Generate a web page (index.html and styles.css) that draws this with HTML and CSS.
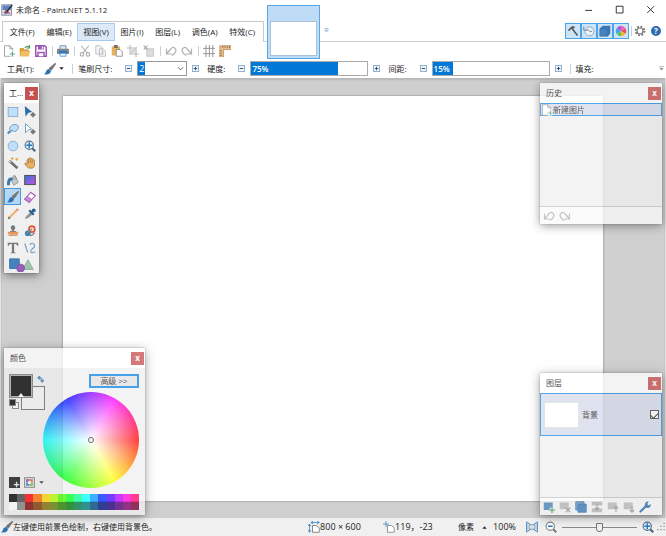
FILE: index.html
```html
<!DOCTYPE html>
<html lang="zh-CN">
<head>
<meta charset="utf-8">
<title>未命名 - Paint.NET 5.1.12</title>
<link rel="stylesheet" href="styles.css">
</head>
<body>
<svg class="defs" aria-hidden="true">
  <defs>
    <linearGradient id="grad" x1="0" y1="0" x2="1" y2="1"><stop offset="0" stop-color="#2878d8"/><stop offset="1" stop-color="#d050e0"/></linearGradient>
  </defs>
  <symbol id="page" viewBox="0 0 16 16"><path d="M2 1h7l4 4v10H2z" fill="#fff" stroke="#8a8a8a"/><path d="M9 1v4h4" fill="none" stroke="#8a8a8a"/></symbol>
  <symbol id="new" viewBox="0 0 16 16"><use href="#page"/><path d="M12 7v9M8 12h8" stroke="#fff" stroke-width="4"/><path d="M12.500 8.500v7M9 12h7" stroke="#5cb080" stroke-width="1.500"/></symbol>
  <symbol id="open" viewBox="0 0 16 16"><path d="M1 4h5l1 2h6v9H1z" fill="#d99a3a"/><path d="M3 8h12l-2 7H1z" fill="#f0bd62"/><path d="M8 4c1-3 4-3 6-1M14 0v4h-4" fill="none" stroke="#4b9b63" stroke-width="1.500"/></symbol>
  <symbol id="save" viewBox="0 0 16 16"><path d="M1 1h12l2 2v12H1z" fill="#fff" stroke="#9b55b5" stroke-width="2"/><path d="M4 1h8v5H4zM3 9h10v6H3z" fill="#9b55b5"/><path d="M9 2h2v3H9zM5 11h6v4H5z" fill="#fff"/></symbol>
  <symbol id="print" viewBox="0 0 16 16"><path d="M4 1h8v5H4z" fill="#dceaf7" stroke="#687787"/><rect x="0" y="5" width="16" height="7" rx="1" fill="#7d858d"/><path d="M3 8h10v4H3z" fill="#2878c0"/><path d="M4 11h8v4H4z" fill="#e4f1fc" stroke="#4b8fd0"/></symbol>
  <symbol id="cut" viewBox="0 0 16 16"><path d="M3 1l8 10M13 1L5 11" stroke="#adadad" stroke-width="1.500"/><circle cx="4" cy="12.500" r="2.300" fill="none" stroke="#adadad" stroke-width="1.500"/><circle cx="12" cy="12.500" r="2.300" fill="none" stroke="#adadad" stroke-width="1.500"/></symbol>
  <symbol id="copy" viewBox="0 0 16 16"><path d="M1 1h6l3 3v8H1zM6 5h5l3 3v7H6z" fill="#f4f4f4" stroke="#b3b3b3"/><path d="M8 9h4M8 12h4" stroke="#c6c6c6"/></symbol>
  <symbol id="paste" viewBox="0 0 16 16"><path d="M1 2h11v12H1z" fill="#e6b25a"/><path d="M4 0h5v4H4z" fill="#77706a"/><path d="M7 6h5l3 3v6H7z" fill="#fff" stroke="#777"/></symbol>
  <symbol id="crop" viewBox="0 0 16 16"><path d="M4 0v12h12M0 4h12v12" fill="none" stroke="#b8b8b8" stroke-width="1.500"/><path d="M5 5h6v6H5z" fill="#ddd"/><path d="M5 11l9-9" stroke="#bbb"/></symbol>
  <symbol id="deselect" viewBox="0 0 16 16"><path d="M5 5h9v10H5z" fill="#dcdcdc" stroke="#bcbcbc"/><path d="M1 1l5 5M6 1L1 6" stroke="#adadad" stroke-width="1.500"/></symbol>
  <symbol id="undo" viewBox="0 0 16 16"><path d="M2 5v7h7M2 12l6-7c3-4 8 0 6 4-1 3-3 4-5 5" fill="none" stroke="#b0b0b0" stroke-width="1.600"/></symbol>
  <symbol id="redo" viewBox="0 0 16 16"><path d="M14 5v7H7M14 12L8 5C5 1 0 5 2 9c1 3 3 4 5 5" fill="none" stroke="#b0b0b0" stroke-width="1.600"/></symbol>
  <symbol id="grid" viewBox="0 0 16 16"><path d="M4 0v16M8.500 0v16M13 0v16M0 4.500h16M0 11.500h16" stroke="#8c8c8c" stroke-width="1.200"/></symbol>
  <symbol id="ruler" viewBox="0 0 16 16"><path d="M1 1h15v5H6v10H1z" fill="#e8c087" stroke="#b98f58"/><path d="M5 1v3M8 1v3M11 1v3M14 1v3M1 8h3M1 11h3M1 14h3" stroke="#8d6a3d"/></symbol>
  <symbol id="brush" viewBox="0 0 16 16"><path d="M15 1L9.500 9 7.500 7z" fill="#777" stroke="#777" stroke-width="2" stroke-linejoin="round"/><path d="M6 8c2 0 4 2 3 4-1 3-5 4-9 3 3-1 2-6 6-7z" fill="#2e72b4"/></symbol>
  <symbol id="app" viewBox="0 0 16 16"><path d="M1 1h13v14H1z" fill="#d9e5f5" stroke="#6c7480"/><path d="M2 2h11v6H2z" fill="#5585c4"/><path d="M3 12l4-5 6 6z" fill="#d14c3e"/><path d="M15 1L8 10" stroke="#333" stroke-width="2"/><path d="M8 9l1 3-5 2z" fill="#235ab0"/></symbol>
  <symbol id="hammer" viewBox="0 0 16 16"><path d="M1 7l5-5c3-1 4 0 5 1L9 4 8 6 6 5 3 8z" fill="#555"/><path d="M7 5l7 9" stroke="#555" stroke-width="2"/></symbol>
  <symbol id="clock" viewBox="0 0 16 16"><circle cx="8.500" cy="8.500" r="6" fill="#e8f3fc" stroke="#9aa8b4" stroke-width="1.300"/><path d="M5.500 5.500l3.500 3h3M1 2v5h5" fill="none" stroke="#7e8d99" stroke-width="1.300"/></symbol>
  <symbol id="layers" viewBox="0 0 16 16"><path d="M5 1h10v10l-3 4H1V5z" fill="#3a78b4"/><path d="M3 3h10v10H3z" fill="#3f7ebc" stroke="#2a649e" stroke-width=".5"/><path d="M1 5h10v10H1z" fill="#4682bd" stroke="#2a649e" stroke-width=".5"/></symbol>
  <symbol id="copylayer" viewBox="0 0 16 16"><path d="M1 1h11v11H1z" fill="#6b9bcb" stroke="#2d6aa8"/><path d="M4 4h11v11H4z" fill="#3f7ebc" stroke="#2d6aa8"/></symbol>
  <symbol id="pie" viewBox="0 0 16 16"><path d="M8 8V1a7 7 0 0 1 6 3.500z" fill="#e868b8"/><path d="M8 8l6-3.500a7 7 0 0 1 0 7z" fill="#f04d55"/><path d="M8 8l6 3.500A7 7 0 0 1 8 15z" fill="#f5b536"/><path d="M8 8v7a7 7 0 0 1-6-3.500z" fill="#58c759"/><path d="M8 8l-6 3.500a7 7 0 0 1 0-7z" fill="#40a5ef"/><path d="M8 8L2 4.500A7 7 0 0 1 8 1z" fill="#aa58e2"/></symbol>
  <symbol id="gear" viewBox="0 0 16 16"><circle cx="8" cy="8" r="5.800" fill="none" stroke="#777" stroke-width="2.600" stroke-dasharray="2.300 2.255"/><circle cx="8" cy="8" r="4" fill="#fff" stroke="#777" stroke-width="1.500"/></symbol>
  <symbol id="caret" viewBox="0 0 16 16"><path d="M1 4h14l-7 8z" fill="currentColor"/></symbol>
  <symbol id="caretup" viewBox="0 0 16 16"><path d="M1 12h14L8 4z" fill="currentColor"/></symbol>
  <symbol id="more" viewBox="0 0 16 16"><path d="M1 2h14" stroke="#7098c8" stroke-width="2"/><path d="M2 7h12l-6 6z" fill="#fff" stroke="#7098c8" stroke-width="2"/></symbol>
  <symbol id="overflow" viewBox="0 0 16 16"><path d="M1 2h14" stroke="#888" stroke-width="2"/><path d="M1 6h14l-7 8z" fill="#999"/></symbol>
  <symbol id="minus" viewBox="0 0 16 16"><rect x="1" y="1" width="14" height="14" fill="#eef5fd" stroke="#8aa8ca" stroke-width="2"/><path d="M4 8h8" stroke="#26466c" stroke-width="2"/></symbol>
  <symbol id="plus" viewBox="0 0 16 16"><use href="#minus"/><path d="M8 4v8" stroke="#26466c" stroke-width="2"/></symbol>
  <symbol id="chevron" viewBox="0 0 16 16"><path d="M2 5l6 6 6-6" fill="none" stroke="#555" stroke-width="2"/></symbol>
  <symbol id="rect" viewBox="0 0 16 16"><rect x="1.500" y="2" width="13" height="12" fill="#bfe0fc" stroke="#7f9fbc"/></symbol>
  <symbol id="lasso" viewBox="0 0 16 16"><path d="M4 10C2 6 6 2 11 2c5 0 5 5 2 8-2 2-4 1-6 0-2 0-4 1-3 2s3-1 2-3" fill="#bfe0fc" stroke="#6c93b5" stroke-width="1.300"/><path d="M4 11l-3 3" stroke="#4a86ba" stroke-width="2.500"/></symbol>
  <symbol id="ellipse" viewBox="0 0 16 16"><circle cx="8" cy="8" r="6.500" fill="#bfe0fc" stroke="#7f9fbc"/></symbol>
  <symbol id="cross" viewBox="0 0 16 16"><path d="M12 7.500l1.500 2 2.500 2-2.500 2-1.500 2-1.500-2-2.500-2 2.500-2z" fill="#777"/></symbol>
  <symbol id="movepix" viewBox="0 0 16 16"><path d="M1 0l10 8-5 1-4 5z" fill="#2d6da8"/><use href="#cross"/></symbol>
  <symbol id="movesel" viewBox="0 0 16 16"><path d="M2 1l8 7-4 1-4 4z" fill="#fff" stroke="#4d80ad"/><use href="#cross"/></symbol>
  <symbol id="zoomplus" viewBox="0 0 16 16"><path d="M10 10l5 5" stroke="#4a6780" stroke-width="3"/><circle cx="7" cy="7" r="5.500" fill="#e5f3ff" stroke="#57718a" stroke-width="1.500"/><path d="M7 3v8M3 7h8" stroke="#287ac0" stroke-width="2"/></symbol>
  <symbol id="zoomminus" viewBox="0 0 16 16"><path d="M10 10l5 5" stroke="#777" stroke-width="2.500"/><circle cx="7" cy="7" r="5.500" fill="#fff" stroke="#7d8790" stroke-width="1.500"/><path d="M4 7h6" stroke="#287ac0" stroke-width="2"/></symbol>
  <symbol id="wand" viewBox="0 0 16 16"><path d="M3 5l11 10" stroke="#707070" stroke-width="3.500"/><path d="M3 5l2 2" stroke="#ddd" stroke-width="2"/><path d="M7 0v4M5 2h4M13 1v4M11 3h4" stroke="#eba534" stroke-width="1.300"/></symbol>
  <symbol id="hand" viewBox="0 0 16 16"><path d="M4 9V4c0-1 2-1 2 0V2c0-1 2-1 2 0v0c0-1 2-1 2 0v1c0-1 2-1 2 0v1c1-1 3 0 2 2v5c0 3-2 4-5 4-3 0-4-1-6-3L1 9c0-2 2-1 3 1z" fill="#e5b264" stroke="#ab7a3c"/><path d="M6 4v4M8.500 3v5M11 4v4" stroke="#ab7a3c"/></symbol>
  <symbol id="bucket" viewBox="0 0 16 16"><path d="M5 7l6-4 4 8-6 4z" fill="#c5c9cc" stroke="#888"/><path d="M8 8c-1-9 4-8 4 0" fill="none" stroke="#888"/><path d="M7 5C2 4 0 7 0 15h4c0-5 0-6 4-7z" fill="#347bb4"/></symbol>
  <symbol id="gradient" viewBox="0 0 16 16"><rect x="1" y="2" width="14" height="12" fill="url(#grad)" stroke="#555" stroke-width="1.500"/></symbol>
  <symbol id="eraser" viewBox="0 0 16 16"><path d="M1 11l8-9 6 4-8 9z" fill="#fff" stroke="#a65ab5" stroke-width="1.500"/><path d="M1 11l3-4 6 4-3 4z" fill="#c890d2" stroke="#a65ab5"/></symbol>
  <symbol id="pencil" viewBox="0 0 16 16"><path d="M14 2L3 13" stroke="#eeb06a" stroke-width="2.500"/><path d="M1 15l1-4 3 3z" fill="#777"/><path d="M13 1l2 2" stroke="#e08080" stroke-width="2"/></symbol>
  <symbol id="picker" viewBox="0 0 16 16"><path d="M1 15l2-4 6-6 3 3-6 5z" fill="#8c9399"/><path d="M7 3l6 6M10 6l3-3" stroke="#285f91" stroke-width="3"/><circle cx="13" cy="3" r="2.500" fill="#285f91"/></symbol>
  <symbol id="stamp" viewBox="0 0 16 16"><path d="M5 4c0-5 6-5 6 0L9 8h3v2H4V8h3z" fill="#777"/><rect x="1" y="9" width="14" height="3" rx="1" fill="#e79559"/><path d="M2 13.500h12" stroke="#d88a58" stroke-width="2"/></symbol>
  <symbol id="recolor" viewBox="0 0 16 16"><circle cx="10.500" cy="5.500" r="3.800" fill="#fff" stroke="#d95b38" stroke-width="2.500"/><circle cx="5" cy="11" r="3.800" fill="#347fba"/><path d="M3 12l8-7M8 14c4 0 5-2 6-4" stroke="#888" stroke-width="2" fill="none"/></symbol>
  <symbol id="type" viewBox="0 0 16 16"><path d="M1 1h14v4h-1.500c0-2-1-2.500-4-2.500V13c0 1 1 1.200 2 1.200V15h-7v-.8c1 0 2 0 2-1.200V2.500c-3 0-4 .5-4 2.500H1z" fill="#777"/></symbol>
  <symbol id="line" viewBox="0 0 16 16"><path d="M1 2l4 12M8 4c1-4 7-2 6 2-1 3-5 3-5 7 0 2 4 1 6 0" fill="none" stroke="#7ba1c5" stroke-width="1.600"/></symbol>
  <symbol id="shapes" viewBox="0 0 32 16"><path d="M3 1h11v11H3z" fill="#4682bd" stroke="#3370a8"/><path d="M24 2l6 11H18z" fill="#9cc5ac" stroke="#8aa898"/><circle cx="15.500" cy="11.500" r="4.500" fill="#9561b9" stroke="#8050a8"/></symbol>
  <symbol id="swap" viewBox="0 0 16 16"><path d="M4 4c6-1 8 2 8 8M7 0L2 4l5 4M8 9l4 5 4-5" fill="none" stroke="#3579b5" stroke-width="2.500"/></symbol>
  <symbol id="addcolor" viewBox="0 0 16 16"><path d="M0 0h16v16H0z" fill="#111"/><path d="M11 7v8M7 11h8" stroke="#dfece4" stroke-width="2"/></symbol>
  <symbol id="palette" viewBox="0 0 16 16"><path d="M1 1h14v14H1z" fill="#fff" stroke="#666" stroke-width="1.500"/><path d="M3 3h5v5H3z" fill="#8052c0"/><path d="M8 3h5v5H8z" fill="#e36d42"/><path d="M3 8h5v5H3z" fill="#3f7fc8"/><path d="M8 8h5v5H8z" fill="#78b84a"/><path d="M6 6h4v4H6z" fill="#fff"/></symbol>
  <symbol id="addlayer" viewBox="0 0 16 16"><path d="M1 2h12v10H1z" fill="#4c86bf"/><path d="M12 8v8M8 12h8" stroke="#f0f0f0" stroke-width="4"/><path d="M12 8v8M8 12h8" stroke="#399e65" stroke-width="1.500"/></symbol>
  <symbol id="dellayer" viewBox="0 0 16 16"><path d="M1 2h12v9H1z" fill="#bdbdbd"/><path d="M9 9l6 6M15 9l-6 6" stroke="#999" stroke-width="1.500"/></symbol>
  <symbol id="merge" viewBox="0 0 16 16"><path d="M1 1h14v5H1zM1 10h14v5H1z" fill="#bbb"/><path d="M8 3v9M5 9l3 3 3-3" fill="none" stroke="#999" stroke-width="1.500"/></symbol>
  <symbol id="up" viewBox="0 0 16 16"><path d="M1 2h12v9H1z" fill="#bdbdbd"/><path d="M12 15V7M9 10l3-3 3 3" fill="none" stroke="#999" stroke-width="1.500"/></symbol>
  <symbol id="down" viewBox="0 0 16 16"><path d="M1 2h12v9H1z" fill="#bdbdbd"/><path d="M12 7v8M9 12l3 3 3-3" fill="none" stroke="#999" stroke-width="1.500"/></symbol>
  <symbol id="wrench" viewBox="0 0 16 16"><path d="M2 14l7-7" stroke="#2d70b0" stroke-width="3" stroke-linecap="round"/><path d="M8 7c-1-4 2-7 5-6l-2 3 2 2 3-2c0 4-3 6-6 5z" fill="#2d70b0"/></symbol>
  <symbol id="size" viewBox="0 0 16 16"><path d="M6 6h5l4 3v6H6z" fill="#fff" stroke="#666"/><path d="M2 4v11M0 7l2-3 2 3M0 12l2 3 2-3M4 2h11M7 0L4 2l3 2M12 0l3 2-3 2" fill="none" stroke="#347fba"/></symbol>
  <symbol id="position" viewBox="0 0 16 16"><path d="M6 6h5l4 3v6H6z" fill="#fff" stroke="#777"/><path d="M4 0v8M0 4h8" stroke="#347fba"/></symbol>
  <symbol id="fit" viewBox="0 0 16 16"><path d="M1 1v14M15 1v14" stroke="#3b80be" stroke-width="1.500"/><path d="M4 5h8v6H4z" fill="#cfe2f3" stroke="#888"/><path d="M2 2l4 3M14 2l-4 3M2 14l4-3M14 14l-4-3" stroke="#347fba" stroke-width="1.300"/></symbol>
  <symbol id="grip" viewBox="0 0 16 16"><path d="M12 1h2v2h-2zM7 6h2v2H7zM12 6h2v2h-2zM2 11h2v2H2zM7 11h2v2H7zM12 11h2v2h-2z" fill="#888"/></symbol>
  <symbol id="min" viewBox="0 0 16 16"><path d="M3 8.500h9" stroke="#333" stroke-width="1.300"/></symbol>
  <symbol id="max" viewBox="0 0 16 16"><path d="M3 3h9v9H3z" fill="none" stroke="#333" stroke-width="1.300"/></symbol>
  <symbol id="close" viewBox="0 0 16 16"><path d="M3 3l9 9M12 3l-9 9" stroke="#333" stroke-width="1.300"/></symbol>
</svg>

<header>
  <div class="titlebar">
    <svg class="icon"><use href="#app"/></svg>
    <h1>未命名 - Paint.NET 5.1.12</h1>
    <button class="sys" aria-label="最小化"><svg class="icon"><use href="#min"/></svg></button>
    <button class="sys" aria-label="最大化"><svg class="icon"><use href="#max"/></svg></button>
    <button class="sys" aria-label="关闭"><svg class="icon"><use href="#close"/></svg></button>
  </div>

  <div class="menurow">
    <nav class="menu">
      <button>文件(F)</button><button>编辑(E)</button><button class="active">视图(V)</button><button>图片(I)</button><button>图层(L)</button><button>调色(A)</button><button>特效(C)</button>
    </nav>
    <button class="morelist" aria-label="图片列表"><svg class="tiny"><use href="#more"/></svg></button>
    <div class="toggles">
      <button class="toggle" aria-label="工具"><svg class="icon"><use href="#hammer"/></svg></button>
      <button class="toggle" aria-label="历史"><svg class="icon"><use href="#clock"/></svg></button>
      <button class="toggle" aria-label="图层"><svg class="icon"><use href="#layers"/></svg></button>
      <button class="toggle" aria-label="颜色"><svg class="icon"><use href="#pie"/></svg></button>
    </div>
    <i class="sep"></i>
    <button class="tool" aria-label="设置"><svg class="icon"><use href="#gear"/></svg></button>
    <button class="help">?</button>
  </div>
  <button class="document" aria-label="未命名"><span></span></button>

  <div class="toolbar">
    <button class="tool" aria-label="新建"><svg class="icon"><use href="#new"/></svg></button>
    <button class="tool" aria-label="打开"><svg class="icon"><use href="#open"/></svg></button>
    <button class="tool" aria-label="保存"><svg class="icon"><use href="#save"/></svg></button>
    <i class="sep"></i>
    <button class="tool" aria-label="打印"><svg class="icon"><use href="#print"/></svg></button>
    <i class="sep"></i>
    <button class="tool" aria-label="剪切"><svg class="icon"><use href="#cut"/></svg></button>
    <button class="tool" aria-label="复制"><svg class="icon"><use href="#copy"/></svg></button>
    <button class="tool" aria-label="粘贴"><svg class="icon"><use href="#paste"/></svg></button>
    <button class="tool" aria-label="裁剪"><svg class="icon"><use href="#crop"/></svg></button>
    <button class="tool" aria-label="取消选择"><svg class="icon"><use href="#deselect"/></svg></button>
    <i class="sep"></i>
    <button class="tool" aria-label="撤销"><svg class="icon"><use href="#undo"/></svg></button>
    <button class="tool" aria-label="重做"><svg class="icon"><use href="#redo"/></svg></button>
    <i class="sep"></i>
    <button class="tool" aria-label="网格"><svg class="icon"><use href="#grid"/></svg></button>
    <button class="tool" aria-label="标尺"><svg class="icon"><use href="#ruler"/></svg></button>
  </div>

  <div class="options">
    <span class="name">工具(T):</span>
    <button class="current" aria-label="画笔"><svg class="icon"><use href="#brush"/></svg><svg class="tiny"><use href="#caret"/></svg></button>
    <i class="sep"></i>
    <label class="name" for="width">笔刷尺寸:</label>
    <button class="step" aria-label="减小"><svg class="mini"><use href="#minus"/></svg></button>
    <div class="combo"><input id="width" type="text" value="2"><button aria-label="展开"><svg class="mini"><use href="#chevron"/></svg></button></div>
    <button class="step" aria-label="增大"><svg class="mini"><use href="#plus"/></svg></button>
    <label class="name" for="hard">硬度:</label>
    <button class="step" aria-label="降低硬度"><svg class="mini"><use href="#minus"/></svg></button>
    <div class="amount"><input id="hard" type="range" value="75" style="--value:75%"><output for="hard">75%</output></div>
    <button class="step" aria-label="提高硬度"><svg class="mini"><use href="#plus"/></svg></button>
    <label class="name" for="space">间距:</label>
    <button class="step" aria-label="减小间距"><svg class="mini"><use href="#minus"/></svg></button>
    <div class="amount"><input id="space" type="range" value="15" style="--value:17%"><output for="space">15%</output></div>
    <button class="step" aria-label="增大间距"><svg class="mini"><use href="#plus"/></svg></button>
    <i class="sep"></i>
    <span class="name">填充:</span>
    <button class="overflow" aria-label="更多选项"><svg class="tiny"><use href="#overflow"/></svg></button>
  </div>
</header>

<main class="workspace">
  <div class="canvas"></div>

  <section class="panel tools">
    <header><h2>工...</h2><button class="x">x</button></header>
    <div class="toolgrid">
      <button aria-label="矩形选择"><svg class="icon"><use href="#rect"/></svg></button>
      <button aria-label="移动像素"><svg class="icon"><use href="#movepix"/></svg></button>
      <button aria-label="套索"><svg class="icon"><use href="#lasso"/></svg></button>
      <button aria-label="移动选区"><svg class="icon"><use href="#movesel"/></svg></button>
      <button aria-label="椭圆选择"><svg class="icon"><use href="#ellipse"/></svg></button>
      <button aria-label="缩放"><svg class="icon"><use href="#zoomplus"/></svg></button>
      <button aria-label="魔棒"><svg class="icon"><use href="#wand"/></svg></button>
      <button aria-label="平移"><svg class="icon"><use href="#hand"/></svg></button>
      <button aria-label="油漆桶"><svg class="icon"><use href="#bucket"/></svg></button>
      <button aria-label="渐变"><svg class="icon"><use href="#gradient"/></svg></button>
      <button class="selected" aria-label="画笔"><svg class="icon"><use href="#brush"/></svg></button>
      <button aria-label="橡皮擦"><svg class="icon"><use href="#eraser"/></svg></button>
      <button aria-label="铅笔"><svg class="icon"><use href="#pencil"/></svg></button>
      <button aria-label="取色器"><svg class="icon"><use href="#picker"/></svg></button>
      <button aria-label="图章"><svg class="icon"><use href="#stamp"/></svg></button>
      <button aria-label="重新着色"><svg class="icon"><use href="#recolor"/></svg></button>
      <button aria-label="文字"><svg class="icon"><use href="#type"/></svg></button>
      <button aria-label="直线"><svg class="icon"><use href="#line"/></svg></button>
      <button class="wide" aria-label="形状"><svg><use href="#shapes"/></svg></button>
    </div>
  </section>

  <section class="panel history">
    <header><h2>历史</h2><button class="x">x</button></header>
    <div class="list"><button class="entry"><svg class="icon"><use href="#new"/></svg>新建图片</button></div>
    <footer>
      <button class="tool" aria-label="撤销"><svg class="icon"><use href="#undo"/></svg></button>
      <button class="tool" aria-label="重做"><svg class="icon"><use href="#redo"/></svg></button>
    </footer>
  </section>

  <section class="panel colors">
    <header><h2>颜色</h2><button class="x">x</button></header>
    <div class="mixer">
      <div class="side">
        <div class="pair">
          <button class="primary" aria-label="前景色"></button>
          <button class="swap" aria-label="交换颜色"><svg class="mini"><use href="#swap"/></svg></button>
          <button class="secondary" aria-label="背景色"></button>
          <button class="reset" aria-label="黑白"><i></i><i></i></button>
        </div>
        <div class="manage">
          <button aria-label="添加颜色"><svg><use href="#addcolor"/></svg></button>
          <button aria-label="调色板"><svg><use href="#palette"/></svg></button>
          <svg class="tiny"><use href="#caret"/></svg>
        </div>
      </div>
      <div class="picker">
        <button class="advanced">高级 &gt;&gt;</button>
        <div class="wheel"><i></i></div>
      </div>
    </div>
    <div class="swatches">
      <i style="background:#000"></i><i style="background:#404040"></i><i style="background:#f00"></i><i style="background:#ff6a00"></i><i style="background:#ffd800"></i><i style="background:#b6ff00"></i><i style="background:#4cff00"></i><i style="background:#00ff21"></i><i style="background:#00ff90"></i><i style="background:#0ff"></i><i style="background:#0094ff"></i><i style="background:#0026ff"></i><i style="background:#4800ff"></i><i style="background:#b200ff"></i><i style="background:#ff00dc"></i><i style="background:#ff006e"></i>
      <i style="background:#fff"></i><i style="background:#808080"></i><i style="background:#7f0000"></i><i style="background:#7f3300"></i><i style="background:#7f6a00"></i><i style="background:#5b7f00"></i><i style="background:#267f00"></i><i style="background:#007f0e"></i><i style="background:#007f46"></i><i style="background:#007f7f"></i><i style="background:#004a7f"></i><i style="background:#00137f"></i><i style="background:#21007f"></i><i style="background:#57007f"></i><i style="background:#7f006e"></i><i style="background:#7f0037"></i>
    </div>
  </section>

  <section class="panel layerlist">
    <header><h2>图层</h2><button class="x">x</button></header>
    <div class="list"><div class="layer"><span class="thumb"></span><label for="visible">背景</label><input id="visible" type="checkbox" checked></div></div>
    <footer>
      <button class="tool" aria-label="新建图层"><svg class="icon"><use href="#addlayer"/></svg></button>
      <button class="tool" aria-label="删除图层"><svg class="icon"><use href="#dellayer"/></svg></button>
      <button class="tool" aria-label="复制图层"><svg class="icon"><use href="#copylayer"/></svg></button>
      <button class="tool" aria-label="合并图层"><svg class="icon"><use href="#merge"/></svg></button>
      <button class="tool" aria-label="上移"><svg class="icon"><use href="#up"/></svg></button>
      <button class="tool" aria-label="下移"><svg class="icon"><use href="#down"/></svg></button>
      <button class="tool" aria-label="属性"><svg class="icon"><use href="#wrench"/></svg></button>
    </footer>
  </section>
</main>

<footer class="status">
  <svg class="icon"><use href="#brush"/></svg>
  <span class="hint">左键使用前景色绘制，右键使用背景色。</span>
  <span class="field"><svg class="icon"><use href="#size"/></svg>800 × 600</span>
  <span class="field"><svg class="icon"><use href="#position"/></svg>119，-23</span>
  <button class="unit">像素<svg class="tiny"><use href="#caretup"/></svg></button>
  <span class="percent">100%</span>
  <button class="tool" aria-label="适应窗口"><svg class="icon"><use href="#fit"/></svg></button>
  <button class="tool" aria-label="缩小"><svg class="icon"><use href="#zoomminus"/></svg></button>
  <input class="zoom" type="range" value="50" aria-label="缩放">
  <button class="tool" aria-label="放大"><svg class="icon"><use href="#zoomplus"/></svg></button>
  <svg class="grip"><use href="#grip"/></svg>
</footer>
</body>
</html>
```
FILE: styles.css
```css
* { box-sizing: border-box; }
body {
  margin: 0;
  min-height: 100vh;
  display: flex;
  flex-direction: column;
  background: #fff;
  color: #222;
  font: 8px/12px "Open Sans", "Noto Sans CJK SC", sans-serif;
}
.defs { position: absolute; width: 0; height: 0; }
button, input { font: inherit; color: inherit; margin: 0; padding: 0; border: 0; background: none; }
button { display: flex; align-items: center; justify-content: center; white-space: nowrap; }
h1, h2 { margin: 0; font: inherit; }
svg { display: block; flex: none; }
.icon { width: 12px; height: 12px; }
.mini { width: 7px; height: 7px; }
.tiny { width: 5px; height: 5px; }
.sep { width: 1px; height: 10px; background: #c3d0dd; flex: none; }
.tool { width: 16px; height: 16px; flex: none; }

/* Title bar and menus */
body > header { position: relative; flex: none; }
.titlebar { display: flex; align-items: center; height: 20px; padding-left: 1px; }
.titlebar h1 { flex: 1; margin-left: 3px; }
.sys { width: 31px; height: 20px; }
.menurow { display: flex; align-items: center; height: 22px; padding-right: 2px; border-bottom: 1px solid #d0d0d0; }
.menu {
  display: flex;
  align-self: stretch;
  width: 262px;
  margin: 1px 0 -1px 2px;
  padding: 0 2px 0 1px;
  border: 1px solid #c8c8c8;
  border-bottom: 0;
  background: #fff;
}
.menu button { flex: 1 0 auto; margin: 1px 0; border: 1px solid transparent; }
.menu .active { background: #dce9f8; border-color: #a6cbee; }
.morelist { margin-left: 60px; }
.toggles { display: flex; margin-left: auto; margin-right: 2px; }
.toggle { width: 16px; height: 16px; border: 1px solid #4da3e8; background: #cce4f8; }
.help { width: 10px; height: 10px; margin: 0 3px; border-radius: 50%; background: #2e6cad; color: #fff; font-weight: 700; }
.document {
  position: absolute;
  left: 267px;
  top: 5px;
  z-index: 2;
  width: 53px;
  height: 54px;
  padding: 15px 2px 2px;
  border: 1px solid #5aa6e6;
  background: #bedcf6;
}
.document span { width: 100%; height: 100%; background: #fff; border: 1px solid #a9c2d8; }
.toolbar { display: flex; align-items: center; height: 17px; padding-left: 1px; }
.toolbar .sep { margin: 0 2px 0 3px; }

/* Tool options */
.options { display: flex; align-items: center; height: 19px; padding: 0 2px 0 7px; }
.current { gap: 3px; margin: 0 8px 0 10px; }
.options .sep + .name { margin-left: 5px; }
.step { width: 17px; height: 14px; flex: none; }
.name + .step { margin-left: 8px; }
.step + .name { margin-left: 3px; }
.combo { display: flex; width: 50px; height: 15px; flex: none; border: 1px solid #999; }
.combo input {
  flex: 1;
  min-width: 0;
  padding-left: 1px;
  color: #fff;
  font-size: 9px;
  background: linear-gradient(#0078d7, #0078d7) no-repeat 0 0 / 7px 13px;
}
.combo button { width: 12px; }
.amount { display: grid; flex: 0 1 118px; height: 15px; border: 1px solid #aaa; }
.amount input {
  grid-area: 1 / 1;
  appearance: none;
  width: 100%;
  height: 13px;
  background: linear-gradient(90deg, #0078d7 var(--value), #fff var(--value));
}
.amount input::-webkit-slider-thumb { appearance: none; width: 1px; height: 13px; }
.amount output { grid-area: 1 / 1; padding-left: 1px; line-height: 13px; color: #fff; font-weight: 600; pointer-events: none; }
.step + .sep { margin-left: 3px; }
.overflow { margin-left: auto; }

/* Work area */
.workspace {
  position: relative;
  flex: 1;
  display: flex;
  padding: 18px 62px 17px;
  background: #cfcfcf;
  border: solid #e4e4e4;
  border-width: 0 1px;
  box-shadow: inset 0 2px 2px #b8b8b8;
}
.canvas { flex: 1; background: #fff; box-shadow: 0 0 2px #777; }
.panel {
  position: absolute;
  display: flex;
  flex-direction: column;
  background: #f0f0f0;
  box-shadow: 0 0 1px #555, 0 2px 9px rgba(0, 0, 0, .5);
  opacity: .76;
}
.panel > header {
  display: flex;
  align-items: center;
  justify-content: space-between;
  height: 20px;
  padding: 0 1px 0 6px;
  flex: none;
  background: #fff;
}
.x { width: 13px; height: 13px; background: #c75050; color: #fff; font-weight: 700; line-height: 10px; }
.panel .list { flex: 1; }
.panel > footer { display: flex; align-items: center; height: 18px; padding-left: 1px; border-top: 1px solid #c4c4c4; background: #fafafa; }

.tools { left: 3px; top: 5px; width: 35px; opacity: 1; }
.tools h2 { overflow: hidden; white-space: nowrap; }
.tools > header { padding-left: 5px; }
.toolgrid { display: grid; grid-template-columns: 17px 17px; grid-auto-rows: 17px; }
.toolgrid button { width: 17px; height: 17px; }
.toolgrid .selected { background: #b6d7f1; border: 1px solid #3d9ae3; }
.toolgrid .wide { grid-column: 1 / 3; width: 34px; }
.wide svg { width: 28px; height: 14px; }

.history { right: 3px; top: 5px; width: 122px; height: 141px; }
.entry { width: 100%; height: 13px; justify-content: flex-start; border: 1px solid #1f8ae0; background: #d5daea; }

.layerlist { right: 3px; bottom: 3px; width: 122px; height: 142px; }
.layer { display: flex; align-items: center; height: 43px; padding: 0 2px 0 3px; border: 1px solid #1f8ae0; background: #d5daea; }
.thumb { width: 35px; height: 26px; margin-right: 3px; background: #fff; border: 1px solid #ddd; }
.layer label { flex: 1; }
.layer input { appearance: none; display: grid; place-items: center; width: 9px; height: 9px; border: 1px solid #444; background: #fff; }
.layer input:checked::after { content: ""; width: 6px; height: 3px; border: solid #222; border-width: 0 0 1px 1px; transform: rotate(-45deg); }

.colors { left: 3px; bottom: 3px; width: 141px; padding-bottom: 5px; }
.mixer { display: grid; grid-template-columns: 34px 96px; margin: 6px 6px 6px 5px; }
.side { display: flex; flex-direction: column; justify-content: space-between; }
.pair { position: relative; width: 36px; height: 36px; }
.pair button { position: absolute; }
.primary { left: 0; top: 0; z-index: 1; width: 24px; height: 24px; background: #000; border: 1px solid #777; outline: 1px solid #aaa; outline-offset: -2px; }
.primary::after { content: ""; position: absolute; bottom: 0; left: 8px; border: solid transparent; border-width: 0 3px 4px; border-bottom-color: #fff; }
.secondary { right: 0; bottom: 0; width: 24px; height: 24px; background: #f6f6f6; border: 1px solid #666; }
.swap { right: 1px; top: 2px; }
.reset { left: 0; top: 25px; width: 10px; height: 10px; display: block; }
.reset i { position: absolute; width: 7px; height: 7px; border: 1px solid #777; background: #fff; right: 0; bottom: 0; }
.reset i:last-child { left: 0; top: 0; background: #000; }
.manage { display: flex; align-items: center; gap: 4px; }
.manage button svg { width: 11px; height: 11px; }
.picker { display: flex; flex-direction: column; align-items: flex-end; gap: 4px; }
.advanced { width: 50px; height: 14px; border: 2px solid #0a84e4; background: #e1e1e1; }
.wheel {
  display: grid;
  place-items: center;
  width: 96px;
  height: 96px;
  border-radius: 50%;
  background: radial-gradient(closest-side, #fff, rgba(255, 255, 255, 0)), conic-gradient(from 90deg, #f00, #ff0, #0f0, #0ff, #00f, #f0f, #f00);
}
.wheel i { width: 6px; height: 6px; border: 1px solid #333; border-radius: 50%; background: #fff; }
.swatches { display: grid; grid-template-columns: repeat(16, 1fr); grid-auto-rows: 8px; margin: 0 6px 0 5px; }

/* Status bar */
.status { display: flex; align-items: center; flex: none; height: 18px; padding-left: 1px; background: #f0f0f0; font-size: 9px; }
.hint { flex: 1; font-size: 8px; }
.field { display: flex; align-items: center; width: 75px; }
.unit { gap: 8px; font-size: 8px; }
.percent { margin: 0 8px 0 6px; }
.status .tool + .tool { margin-left: 3px; }
.grip { width: 10px; height: 10px; }
.zoom { appearance: none; width: 75px; height: 12px; margin: 0 3px; background: linear-gradient(#888, #888) no-repeat center / 100% 1px; }
.zoom::-webkit-slider-thumb { appearance: none; width: 7px; height: 9px; border: 1px solid #777; border-radius: 0 0 3px 3px; background: #f0f0f0; }
```
